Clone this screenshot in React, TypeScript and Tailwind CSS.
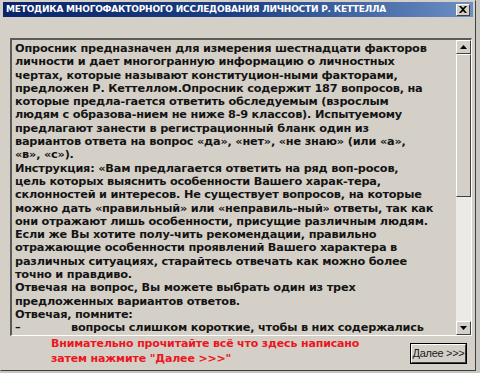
import React from "react";

const lines = [
  "Опросник предназначен для измерения шестнадцати факторов",
  "личности и дает многогранную информацию о личностных",
  "чертах, которые называют конституцион-ными факторами,",
  "предложен Р. Кеттеллом.Опросник содержит 187 вопросов, на",
  "которые предла-гается ответить обследуемым (взрослым",
  "людям с образова-нием не ниже 8-9 классов). Испытуемому",
  "предлагают занести в регистрационный бланк один из",
  "вариантов ответа на вопрос «да», «нет», «не знаю» (или «а»,",
  "«в», «с»).",
  "Инструкция: «Вам предлагается ответить на ряд воп-росов,",
  "цель которых выяснить особенности Вашего харак-тера,",
  "склонностей и интересов. Не существует вопросов, на которые",
  "можно дать «правильный» или «неправиль-ный» ответы, так как",
  "они отражают лишь особенности, присущие различным людям.",
  "Если же Вы хотите полу-чить рекомендации, правильно",
  "отражающие особенности проявлений Вашего характера в",
  "различных ситуациях, старайтесь отвечать как можно более",
  "точно и правдиво.",
  "Отвечая на вопрос, Вы можете выбрать один из трех",
  "предложенных вариантов ответов.",
  "Отвечая, помните:",
];

export default function App() {
  return (
    <div className="w-[480px] h-[373px] bg-[#c8c6c0] overflow-hidden">
      {/* window */}
      <div className="w-[476px] h-[371px] bg-[#d4d0c8] border border-t-[#d4d0c8] border-l-[#d4d0c8] border-r-[#404040] border-b-[#404040] flex flex-col">
        {/* title bar */}
        <div className="mx-[2px] mt-[1px] h-[15px] bg-gradient-to-r from-[#0a246a] via-[#1d3f85] to-[#6d8fc4] flex items-center justify-between pl-[3px] pr-[3px]">
          <span className="text-white font-bold text-[9px] leading-none tracking-[-0.2px] [font-family:'DejaVu_Sans',sans-serif]">
            МЕТОДИКА МНОГОФАКТОРНОГО ИССЛЕДОВАНИЯ ЛИЧНОСТИ Р. КЕТТЕЛЛА
          </span>
          <div className="w-[14px] h-[12px] bg-[#d4d0c8] border border-t-white border-l-white border-r-[#404040] border-b-[#404040] flex items-center justify-center">
            <svg width="8" height="7" viewBox="0 0 8 7">
              <path d="M0 0 L2 0 L4 2 L6 0 L8 0 L5 3.5 L8 7 L6 7 L4 5 L2 7 L0 7 L3 3.5 Z" fill="#000" />
            </svg>
          </div>
        </div>

        {/* memo */}
        <div className="ml-[9px] mt-[21px] w-[462px] h-[298px] border-t-2 border-l-2 border-t-[#5a5a58] border-l-[#5a5a58] border-b border-r border-b-white border-r-white flex">
          <div className="flex-1 pl-[3px] pt-[2px] overflow-hidden text-[#141414] font-bold text-[11.3px] leading-[13.3px] [font-family:'DejaVu_Sans',sans-serif] tracking-[-0.2px] whitespace-nowrap">
            {lines.map((l, i) => (
              <div key={i}>{l}</div>
            ))}
            <div className="flex">
              <span className="w-[56px]">–</span>
              <span>вопросы слишком короткие, чтобы в них содержались</span>
            </div>
          </div>
          {/* scrollbar */}
          <div className="w-[15px] flex flex-col bg-[#eceae6]">
            <div className="h-[14px] bg-[#d4d0c8] border border-t-white border-l-white border-r-[#404040] border-b-[#404040] flex items-center justify-center">
              <svg width="7" height="4" viewBox="0 0 7 4"><path d="M3.5 0 L7 4 L0 4 Z" fill="#000" /></svg>
            </div>
            <div className="h-[143px] bg-[#d4d0c8] border border-t-white border-l-white border-r-[#404040] border-b-[#404040]" />
            <div className="flex-1" />
            <div className="h-[14px] bg-[#d4d0c8] border border-t-white border-l-white border-r-[#404040] border-b-[#404040] flex items-center justify-center">
              <svg width="7" height="4" viewBox="0 0 7 4"><path d="M0 0 L7 0 L3.5 4 Z" fill="#000" /></svg>
            </div>
          </div>
        </div>

        {/* bottom */}
        <div className="flex items-start">
          <div className="ml-[50px] text-[#ec1620] font-bold text-[11px] leading-[15px] [font-family:'DejaVu_Sans',sans-serif] tracking-[-0.15px]">
            <div>Внимательно прочитайте всё что здесь написано</div>
            <div>затем нажмите "Далее &gt;&gt;&gt;"</div>
          </div>
          <div className="ml-auto mr-[8px] mt-[7px] w-[57px] h-[21px] border border-black">
            <div className="w-full h-full bg-[#d4d0c8] border border-t-white border-l-white border-r-[#404040] border-b-[#404040] flex items-center justify-center">
              <span className="text-[11px] text-[#202020] [font-family:'Liberation_Sans',sans-serif] tracking-[-0.3px]">Далее &gt;&gt;&gt;</span>
            </div>
          </div>
        </div>
      </div>
    </div>
  );
}
